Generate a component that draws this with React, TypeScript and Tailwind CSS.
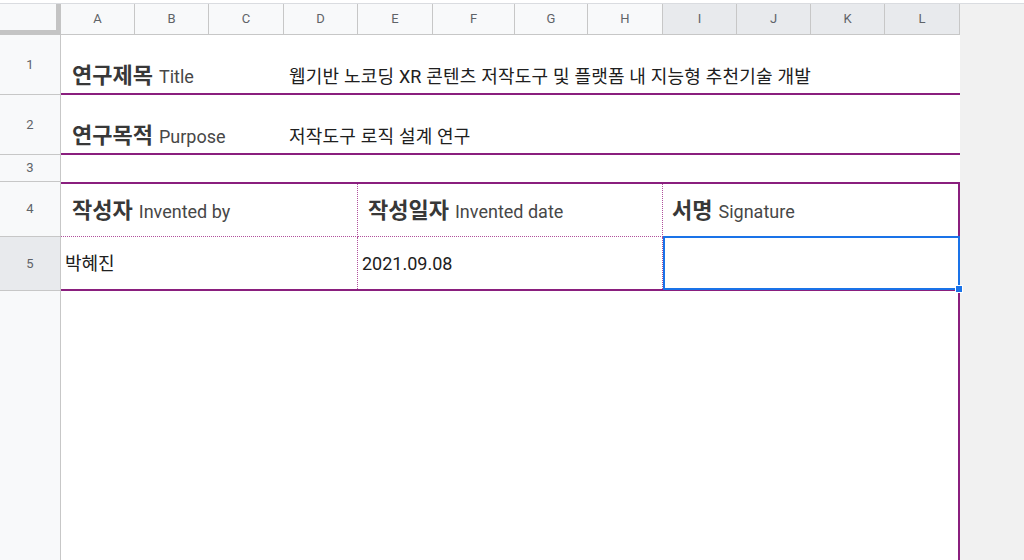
import React from 'react';

const cols: { label: string; w: string; sel?: boolean }[] = [
  { label: 'A', w: 'w-[74px]' },
  { label: 'B', w: 'w-[74px]' },
  { label: 'C', w: 'w-[75px]' },
  { label: 'D', w: 'w-[74px]' },
  { label: 'E', w: 'w-[75px]' },
  { label: 'F', w: 'w-[82px]' },
  { label: 'G', w: 'w-[73px]' },
  { label: 'H', w: 'w-[75px]' },
  { label: 'I', w: 'w-[74px]', sel: true },
  { label: 'J', w: 'w-[74px]', sel: true },
  { label: 'K', w: 'w-[74px]', sel: true },
  { label: 'L', w: 'w-[75px]', sel: true },
];

function RowHead({ n, sel }: { n?: number; sel?: boolean }) {
  return (
    <div
      className={`flex w-[61px] shrink-0 items-center justify-center border-r border-b border-[#c7c7c7] text-[13px] text-[#5f6368] ${
        sel ? 'bg-[#e8eaed]' : 'bg-[#f8f9fa]'
      }`}
    >
      {n}
    </div>
  );
}

function Label({ ko, en }: { ko: string; en: string }) {
  return (
    <span className="whitespace-nowrap">
      <span className="text-[22px] font-bold text-[#383838]">{ko}</span>
      <span className="ml-[6px] text-[18px] text-[#474747]">{en}</span>
    </span>
  );
}

export default function App() {
  return (
    <div className="flex h-[560px] w-[1024px] flex-col overflow-hidden bg-white font-[Roboto,'Noto_Sans_CJK_KR',sans-serif]">
      <div className="h-[4px] shrink-0 border-b border-[#dadce0] bg-white" />
      <div className="flex flex-1">
        <div className="flex w-[960px] flex-col">
          {/* column headers */}
          <div className="flex h-[31px] shrink-0">
            <div className="w-[61px] shrink-0 border-r-[5px] border-b-[5px] border-[#c4c4c4] bg-[#f8f9fa]" />
            {cols.map((c) => (
              <div
                key={c.label}
                className={`${c.w} flex shrink-0 items-center justify-center border-r border-b border-[#c7c7c7] text-[13px] text-[#5f6368] ${
                  c.sel ? 'bg-[#e8eaed]' : 'bg-[#f8f9fa]'
                }`}
              >
                {c.label}
              </div>
            ))}
          </div>

          {/* row 1 */}
          <div className="flex h-[60px] shrink-0">
            <RowHead n={1} />
            <div className="flex flex-1 items-end border-b-2 border-[#8a1f7e] pb-[1px] pl-[11px]">
              <div className="w-[217px] shrink-0">
                <Label ko="연구제목" en="Title" />
              </div>
              <span className="mb-[2px] whitespace-nowrap text-[18px] tracking-[0.2px] text-[#202020]">
                웹기반 노코딩 XR 콘텐츠 저작도구 및 플랫폼 내 지능형 추천기술 개발
              </span>
            </div>
          </div>

          {/* row 2 */}
          <div className="flex h-[60px] shrink-0">
            <RowHead n={2} />
            <div className="flex flex-1 items-end border-b-2 border-[#8a1f7e] pb-[1px] pl-[11px]">
              <div className="w-[217px] shrink-0">
                <Label ko="연구목적" en="Purpose" />
              </div>
              <span className="mb-[2px] whitespace-nowrap text-[18px] tracking-[0.2px] text-[#202020]">저작도구 로직 설계 연구</span>
            </div>
          </div>

          {/* row 3 */}
          <div className="flex h-[27px] shrink-0">
            <RowHead n={3} />
            <div className="flex-1" />
          </div>

          {/* row 4 */}
          <div className="flex h-[55px] shrink-0">
            <RowHead n={4} />
            <div className="flex flex-1 border-t-2 border-r-2 border-[#8a1f7e]">
              <div className="flex w-[297px] shrink-0 items-center border-r border-b border-dotted border-[#b0509c] pl-[11px]">
                <Label ko="작성자" en="Invented by" />
              </div>
              <div className="flex w-[305px] shrink-0 items-center border-r border-b border-dotted border-[#b0509c] pl-[10px]">
                <Label ko="작성일자" en="Invented date" />
              </div>
              <div className="flex flex-1 items-center border-b border-dotted border-[#b0509c] pl-[9px]">
                <Label ko="서명" en="Signature" />
              </div>
            </div>
          </div>

          {/* row 5 */}
          <div className="flex h-[54px] shrink-0">
            <RowHead n={5} sel />
            <div className="flex flex-1 border-r-2 border-b-2 border-[#8a1f7e]">
              <div className="flex w-[297px] shrink-0 items-center border-r border-dotted border-[#b0509c] pl-[4px] text-[18px] text-[#202020]">
                박혜진
              </div>
              <div className="flex w-[305px] shrink-0 items-center border-r border-dotted border-[#b0509c] pl-[4px] text-[18px] text-[#202020]">
                2021.09.08
              </div>
              <div className="relative flex-1">
                <div className="absolute -top-[1px] -right-[2px] -bottom-[1px] left-0 border-2 border-[#1a73e8]" />
                <div className="absolute -right-[5px] -bottom-[4px] h-[8px] w-[8px] border border-white bg-[#1a73e8]" />
              </div>
            </div>
          </div>

          {/* rest */}
          <div className="flex flex-1">
            <div className="w-[61px] shrink-0 border-r border-[#c7c7c7] bg-[#f8f9fa]" />
            <div className="flex-1 border-r-2 border-[#8a1f7e]" />
          </div>
        </div>
        <div className="flex-1 bg-[#f1f1f1]" />
      </div>
    </div>
  );
}
